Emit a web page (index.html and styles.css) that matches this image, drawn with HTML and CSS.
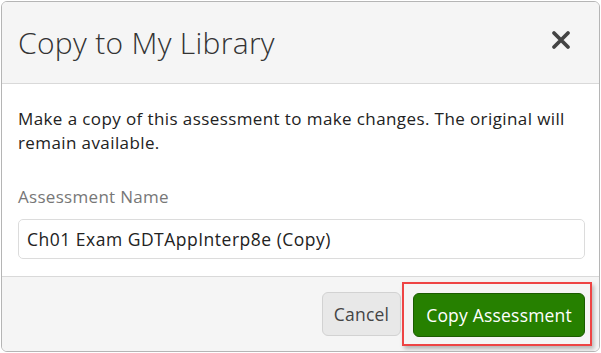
FILE: index.html
```html
<!DOCTYPE html>
<html lang="en">

<head>
    <meta charset="UTF-8" />
    <meta name="viewport" content="width=device-width, initial-scale=1.0" />
    <title>Copy to My Library</title>
    <link rel="stylesheet" href="styles.css">
</head>

<body>
    <div class="modal">
        <!-- Header -->
        <div class="modal-header">
            <h1>Copy to My Library</h1>
            <button class="close-btn" aria-label="Close">
                <svg width="20" height="20" viewBox="0 0 20 20">
                    <path d="M3 3 L17 17 M17 3 L3 17" stroke="#444" stroke-width="3.8" stroke-linecap="round" />
                </svg>
            </button>
        </div>

        <!-- Body -->
        <div class="modal-body">
            <p class="intro">Make a copy of this assessment to make changes. The original will remain available.</p>
            <label class="field-label" for="assessmentName">Assessment Name</label>
            <input class="field-input" id="assessmentName" type="text" value="Ch01 Exam GDTAppInterp8e (Copy)" />
        </div>

        <!-- Footer -->
        <div class="modal-footer">
            <button class="btn btn-cancel">Cancel</button>
            <div class="highlight">
                <button class="btn btn-primary">Copy Assessment</button>
            </div>
        </div>
    </div>
</body>

</html>
```

FILE: styles.css
```css
* {
    margin: 0;
    padding: 0;
    box-sizing: border-box;
    font-family: "Open Sans", "Noto Sans", sans-serif;
}

body {
    background-color: #ffffff;
    color: #222;
}

.modal {
    margin: 1px 1px 0 1px;
    width: 599px;
    height: 351px;
    border: 1px solid #b5b5b5;
    border-radius: 6px;
    overflow: hidden;
    display: flex;
    flex-direction: column;
}

/* Header */

.modal-header {
    height: 82px;
    background-color: #f5f5f5;
    border-bottom: 1px solid #d9d9d9;
    display: flex;
    align-items: center;
    justify-content: space-between;
    padding: 0 28px 0 16px;
}

.modal-header h1 {
    font-size: 30px;
    font-weight: 300;
    color: #333;
    letter-spacing: 0.3px;
}

.close-btn {
    background: none;
    border: none;
    display: flex;
    margin-bottom: 5px;
    cursor: pointer;
}

/* Body */

.modal-body {
    height: 192px;
    padding: 23px 15px 0 16px;
    background: white;
}

.intro {
    font-size: 17px;
    line-height: 24px;
    letter-spacing: 0.4px;
    color: #222;
    margin-bottom: 30px;
}

.field-label {
    display: block;
    font-size: 17px;
    letter-spacing: 0.3px;
    color: #777;
    margin-bottom: 11px;
}

.field-input {
    width: 567px;
    height: 40px;
    border: 1px solid #dcdcdc;
    border-radius: 5px;
    padding: 0 8px;
    font-size: 17.5px;
    letter-spacing: 0.5px;
    color: #222;
}

/* Footer */

.modal-footer {
    flex: 1;
    background-color: #f5f5f5;
    border-top: 1px solid #d9d9d9;
    display: flex;
    align-items: center;
    justify-content: flex-end;
    padding-right: 7px;
    gap: 1px;
}

.btn {
    height: 44px;
    border-radius: 6px;
    font-size: 17.5px;
    letter-spacing: 0.2px;
    padding: 0 12px;
    cursor: pointer;
}

.btn-cancel {
    padding: 0 11px;
    background-color: #e8e8e8;
    border: 1px solid #d2d2d2;
    color: #444;
}

.highlight {
    border: 2px solid #ee4444;
    padding: 9px 5px 7px 9px;
    box-shadow: 2px 3px 4px rgba(0, 0, 0, 0.25);
}

.btn-primary {
    padding: 0 12px;
    background-color: #268000;
    border: 1px solid #1b5c00;
    color: #fff;
}
```
